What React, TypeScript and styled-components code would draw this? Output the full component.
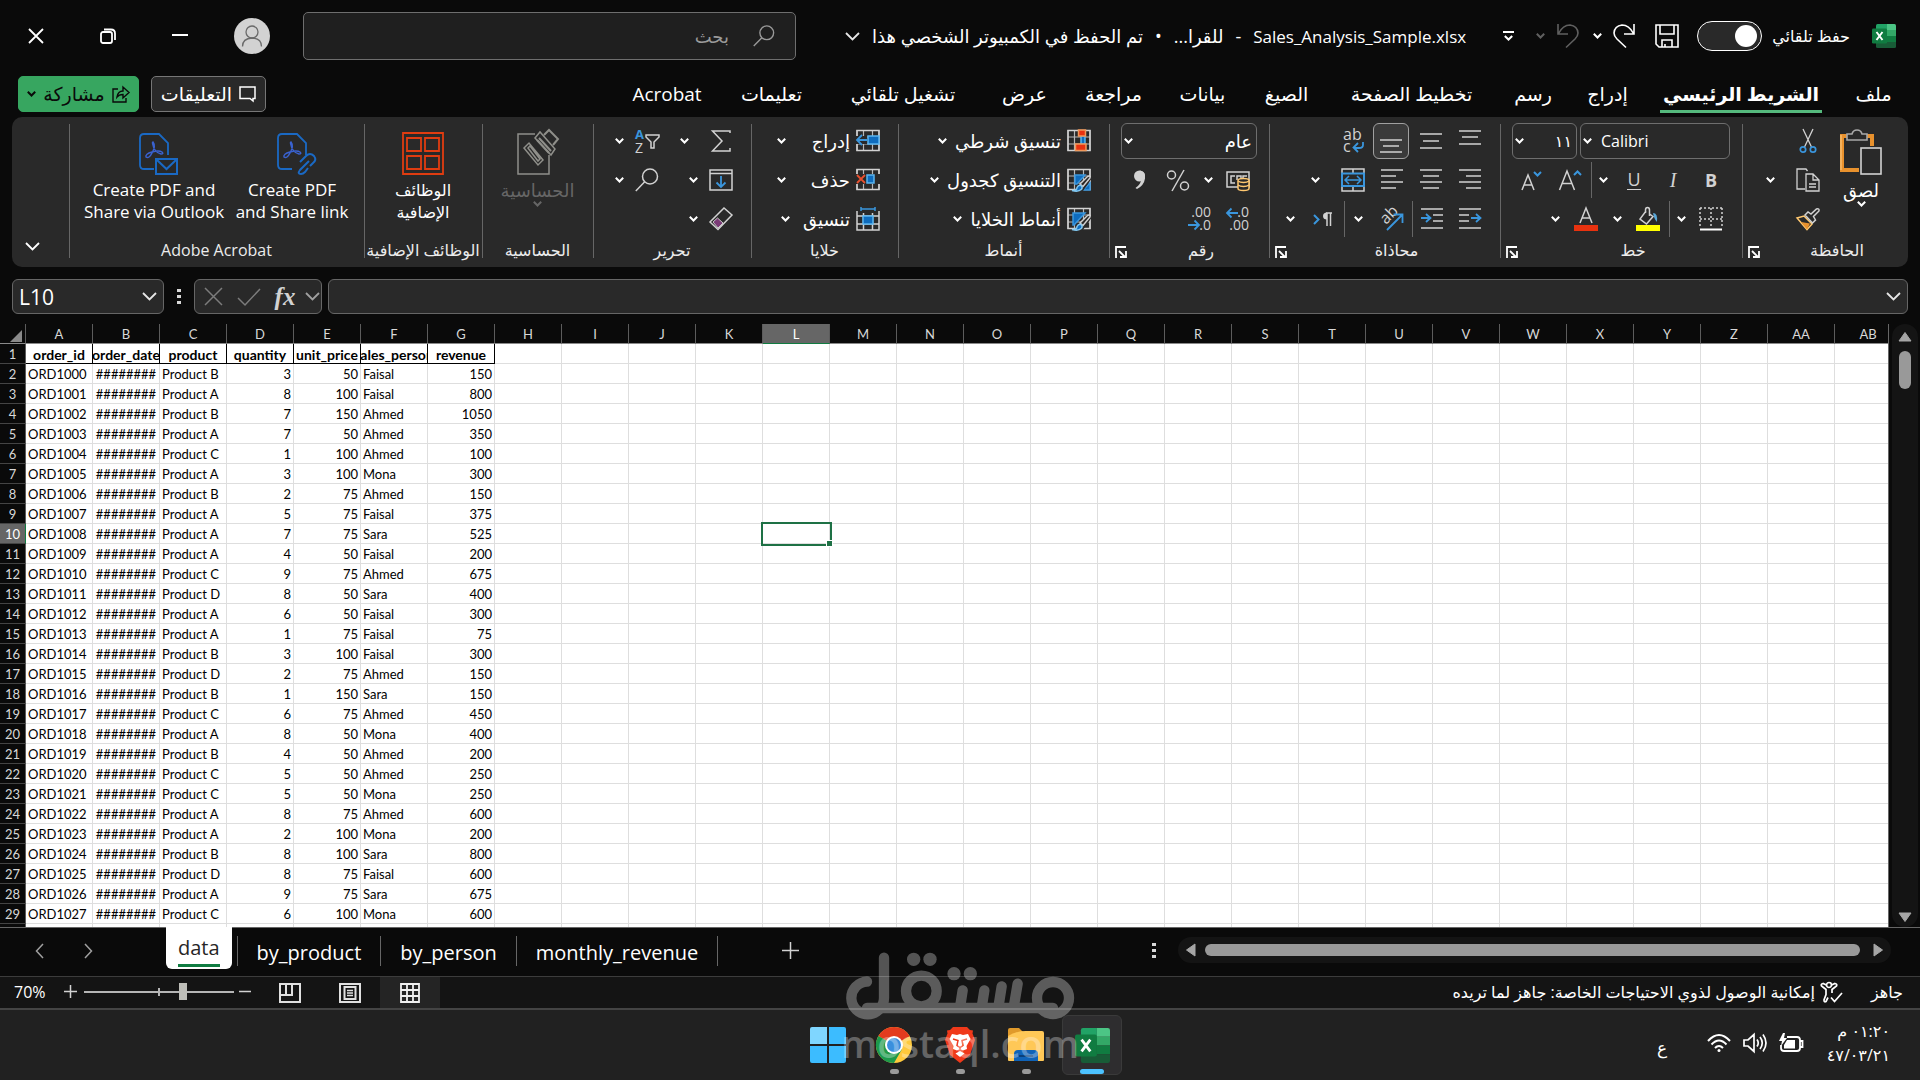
import React from "react";
import styled, { createGlobalStyle, css } from "styled-components";

/* ---------- tokens ---------- */
const c = {
  bg: "#0a0a0a",
  panel: "#292929",
  line: "#666666",
  fg: "#ffffff",
  icon: "#d2d2d2",
  blue: "#3a96dd",
  deep: "#0f6cbd",
  orange: "#e8912d",
  green: "#107c41",
};
const uiFont = `"Open Sans", "DejaVu Sans", sans-serif`;
const cellFont = `Lato, "Open Sans", sans-serif`;

const Global = createGlobalStyle`
  *, *::before, *::after { box-sizing: border-box; }
  body { margin: 0; background: ${c.bg}; color: ${c.fg}; font-family: ${uiFont}; }
  button, input, select { font: inherit; color: inherit; margin: 0; }
  button { background: none; border: 0; padding: 0; cursor: pointer; }
  svg { display: block; flex: none; overflow: visible; }
`;

/* ---------- shell ---------- */
const Shell = styled.div`
  position: relative;
  display: flex;
  flex-direction: column;
  height: 100vh;
  min-height: 640px;
  overflow: hidden;
  white-space: nowrap;
`;

/* ---------- title bar ---------- */
const TitleBar = styled.header`
  display: flex;
  align-items: center;
  height: 72px;
  flex: none;
  padding-inline-start: 24px;
  font-size: 18px;
`;
const AutoSave = styled.label`
  display: flex;
  align-items: center;
  gap: 10px;
  margin-inline-start: 22px;
  font-size: 16px;
`;
const Toggle = styled.input`
  appearance: none;
  width: 65px;
  height: 30px;
  border: 1px solid ${c.fg};
  border-radius: 15px;
  background: ${c.panel};
  display: flex;
  align-items: center;
  padding: 0 4px;
  &::after {
    content: "";
    width: 22px;
    height: 22px;
    border-radius: 50%;
    background: ${c.fg};
  }
`;
const Slot = styled.button<{ $w?: number; $dim?: boolean }>`
  display: flex;
  align-items: center;
  justify-content: center;
  flex: none;
  width: ${(p) => p.$w ?? 38}px;
  height: 36px;
  opacity: ${(p) => (p.$dim ? 0.35 : 1)};
`;
const DocTitle = styled.div`
  display: flex;
  align-items: center;
  flex: 1;
  gap: 12px;
  padding-inline-start: 23px;
  bdi { font-size: 17px; }
`;
const SearchBox = styled.label`
  display: flex;
  align-items: center;
  gap: 22px;
  width: 493px;
  height: 48px;
  padding-inline-start: 20px;
  border: 1px solid #6e6e6e;
  border-radius: 5px;
  background: #1f1f1f;
`;
const SearchInput = styled.input`
  flex: 1;
  min-width: 0;
  border: 0;
  outline: 0;
  background: none;
  &::placeholder { color: #9a9a9a; opacity: 1; }
`;
const WindowButtons = styled.div`
  display: flex;
  padding-inline-start: 15px;
`;

/* ---------- ribbon tabs ---------- */
const TabRow = styled.nav`
  display: flex;
  align-items: flex-start;
  height: 45px;
  flex: none;
  padding: 0 12px 0 18px;
`;
const Tab = styled.button<{ $w: number; $active?: boolean }>`
  width: ${(p) => p.$w}px;
  height: 41px;
  display: flex;
  justify-content: center;
  font-size: 19px;
  font-weight: ${(p) => (p.$active ? 700 : 400)};
  span {
    height: 41px;
    padding: 0 3px;
    line-height: 44px;
    border-bottom: 3px solid ${(p) => (p.$active ? "#55b97d" : "transparent")};
  }
`;
const Actions = styled.div`
  display: flex;
  gap: 12px;
  margin-inline-start: auto;
  padding-top: 4px;
`;
const Action = styled.button<{ $primary?: boolean }>`
  display: flex;
  align-items: center;
  justify-content: center;
  gap: 7px;
  height: 36px;
  width: ${(p) => (p.$primary ? 121 : 115)}px;
  border-radius: 5px;
  font-size: 19px;
  line-height: 30px;
  border: 1px solid ${(p) => (p.$primary ? "#37a660" : "#767676")};
  background: ${(p) => (p.$primary ? "#37a660" : c.panel)};
  color: ${(p) => (p.$primary ? "#0a0a0a" : c.fg)};
`;

/* ---------- ribbon ---------- */
const Ribbon = styled.section`
  display: flex;
  flex: none;
  height: 150px;
  margin: 0 12px;
  border-radius: 10px;
  background: ${c.panel};
`;
const Group = styled.div<{ $w: number }>`
  position: relative;
  display: flex;
  flex-direction: column;
  flex: none;
  width: ${(p) => p.$w}px;
  padding-top: 4px;
  &::after {
    content: "";
    position: absolute;
    inset-inline-end: 0;
    top: 7px;
    bottom: 9px;
    width: 1px;
    background: ${c.line};
  }
`;
const Body = styled.div<{ $pad?: number; $center?: boolean }>`
  display: flex;
  height: 117px;
  padding-inline-start: ${(p) => p.$pad ?? 0}px;
  justify-content: ${(p) => (p.$center ? "center" : "flex-start")};
`;
const Rows = styled.div`
  display: flex;
  flex-direction: column;
`;
const Row = styled.div<{ $gap?: number }>`
  display: flex;
  align-items: center;
  gap: ${(p) => p.$gap ?? 0}px;
  height: 39px;
`;
const Pair = styled.div`
  display: flex;
  width: 74px;
`;
const Foot = styled.div`
  display: flex;
  align-items: center;
  justify-content: center;
  height: 24px;
  font-size: 16px;
  line-height: 24px;
  color: #ececec;
  span { flex: 1; text-align: center; }
`;
const Launcher = styled.button`
  width: 24px;
  height: 24px;
  display: flex;
  align-items: flex-end;
  justify-content: center;
  padding-bottom: 4px;
`;
const Divider = styled.i`
  width: 2px;
  height: 36px;
  flex: none;
  border-inline-start: 1px solid ${c.line};
`;
const Big = styled.button<{ $w?: number; $dim?: boolean; $size?: number }>`
  display: flex;
  flex-direction: column;
  align-items: center;
  width: ${(p) => p.$w ?? 100}px;
  padding-top: 8px;
  font-size: ${(p) => p.$size ?? 16}px;
  line-height: 22px;
  color: ${(p) => (p.$dim ? "#666" : c.fg)};
  svg + span { margin-top: 4px; }
`;
const Command = styled.button<{ $min?: number }>`
  display: flex;
  align-items: center;
  gap: 6px;
  height: 36px;
  font-size: 18px;
  line-height: 30px;
  span {
    min-width: ${(p) => p.$min ?? 0}px;
    text-align: start;
    padding-inline-end: 2px;
  }
`;
const SelectWrap = styled.div<{ $w: number }>`
  display: grid;
  align-items: center;
  width: ${(p) => p.$w}px;
  height: 36px;
  > * { grid-area: 1 / 1; }
  > svg { justify-self: end; margin-inline-end: 3px; pointer-events: none; }
`;
const Select = styled.select<{ $size?: number }>`
  appearance: none;
  width: 100%;
  height: 36px;
  padding: 0 4px 0 20px;
  border: 1px solid #6e6e6e;
  border-radius: 6px;
  background: transparent;
  font-size: ${(p) => p.$size ?? 16}px;
  outline: 0;
  option { background: ${c.panel}; }
`;
const Pressed = styled(Slot)`
  width: 36px;
  margin: 0 2px 0 1px;
  border: 1px solid #a0a0a0;
  border-radius: 6px;
  background: #3a3a3a;
`;
const Letter = styled.span<{ $b?: boolean; $i?: boolean; $u?: boolean }>`
  font-size: 18px;
  line-height: 20px;
  color: ${c.icon};
  font-weight: ${(p) => (p.$b ? 700 : 400)};
  ${(p) => p.$i && css`font-style: italic; font-family: "Liberation Serif", serif; font-size: 20px;`}
  ${(p) => p.$u && css`border-bottom: 1px solid ${c.icon};`}
`;
const Collapse = styled.button`
  flex: 1;
  display: flex;
  align-items: flex-end;
  justify-content: center;
  padding: 0 16px 16px 0;
`;

/* ---------- formula bar ---------- */
const FormulaBar = styled.div`
  display: flex;
  align-items: center;
  flex: none;
  height: 57px;
  padding: 2px 12px 0;
`;
const Field = styled.label<{ $w?: number }>`
  display: flex;
  align-items: center;
  height: 35px;
  ${(p) => (p.$w ? `width: ${p.$w}px; flex: none;` : "flex: 1;")}
  padding: 0 6px;
  border: 1px solid ${c.line};
  border-radius: 6px;
  background: ${c.panel};
`;
const FieldInput = styled.input`
  flex: 1;
  min-width: 0;
  border: 0;
  outline: 0;
  padding: 0;
  background: none;
  font-size: 21px;
  line-height: 28px;
`;
const FxBox = styled.div`
  display: flex;
  align-items: center;
  width: 128px;
  height: 35px;
  margin-inline-end: 6px;
  border: 1px solid ${c.line};
  border-radius: 6px;
  background: ${c.panel};
`;
const Fx = styled.span`
  font: italic 700 25px/28px "Liberation Serif", serif;
  color: ${c.icon};
`;

/* ---------- sheet ---------- */
const SheetArea = styled.main`
  display: flex;
  flex: 1;
  min-height: 0;
`;
const SheetClip = styled.div`
  flex: 1;
  min-width: 0;
  overflow: hidden;
  border-right: 1px solid ${c.line};
`;
const Sheet = styled.table`
  table-layout: fixed;
  width: 1902px;
  border-collapse: separate;
  border-spacing: 0;
  font-family: ${cellFont};
  font-size: 13px;
  line-height: 17px;
  color: #000;
`;
const ColHead = styled.th<{ $on?: boolean }>`
  height: 20px;
  padding: 2px 0 0;
  font-weight: 400;
  color: ${(p) => (p.$on ? "#fff" : "#d8d8d8")};
  background: ${(p) => (p.$on ? "#666" : c.bg)};
  border-right: 1px solid #5c5c5c;
  border-bottom: 1px solid ${(p) => (p.$on ? c.green : "#8a8a8a")};
`;
const RowHead = styled.th<{ $on?: boolean }>`
  height: 20px;
  padding: 2px 0 0;
  font-weight: 400;
  color: ${(p) => (p.$on ? "#fff" : "#d8d8d8")};
  background: ${(p) => (p.$on ? "#666" : c.bg)};
  border-right: 1px solid ${(p) => (p.$on ? c.green : "#5c5c5c")};
  border-bottom: 1px solid #444;
`;
const Corner = styled(ColHead)`
  svg { margin: 2px 3px 0 auto; }
`;
const Cell = styled.td<{ $a?: "left" | "right" | "center"; $title?: boolean }>`
  position: relative;
  height: 20px;
  padding: 2px 2px 0;
  background: #fff;
  text-align: ${(p) => p.$a ?? "left"};
  border-right: 1px solid ${(p) => (p.$title ? "#000" : "#dedede")};
  border-bottom: 1px solid ${(p) => (p.$title ? "#000" : "#dedede")};
  ${(p) => p.$title && css`font-weight: 700; font-size: 14px; padding: 2px 0 0;`}
`;
const Clip = styled.div`
  display: flex;
  justify-content: center;
  overflow: hidden;
`;
const Cursor = styled.div`
  position: absolute;
  z-index: 1;
  inset: -2px -3px -3px -2px;
  border: 2px solid #1e7145;
  &::after {
    content: "";
    position: absolute;
    right: -3px;
    bottom: -3px;
    width: 7px;
    height: 7px;
    border: 1px solid #fff;
    background: #1e7145;
  }
`;
const VScroll = styled.div`
  display: flex;
  flex-direction: column;
  align-items: center;
  width: 26px;
  margin: 0 2px 0 3px;
  border-radius: 13px;
  background: #141414;
  padding: 7px 0 4px;
`;
const VThumb = styled.div`
  width: 12px;
  height: 38px;
  margin: 8px 0 auto;
  border-radius: 6px;
  background: #999;
`;

/* ---------- sheet tabs ---------- */
const SheetBar = styled.div`
  display: flex;
  flex: none;
  height: 49px;
  padding: 0 29px 0 15px;
  border-top: 1px solid ${c.line};
  font-size: 20px;
`;
const NavSlot = styled.button<{ $w: number }>`
  display: flex;
  align-items: center;
  justify-content: center;
  width: ${(p) => p.$w}px;
  height: 45px;
`;
const SheetTabs = styled.div`
  display: flex;
  margin-inline-start: 53px;
`;
const ActiveSheet = styled.button`
  height: 42px;
  margin: -1px 5px 0 0;
  padding: 0 12px;
  border-radius: 0 0 6px 6px;
  background: #fff;
  color: #262626;
  span { display: block; height: 38px; line-height: 38px; border-bottom: 3px solid ${c.green}; }
`;
const SheetTab = styled.button`
  height: 30px;
  margin-top: 8px;
  padding: 4px 19px 0;
  line-height: 26px;
  border-right: 1px solid ${c.line};
  &:nth-child(2) { border-left: 1px solid ${c.line}; }
`;
const HScroll = styled.div`
  display: flex;
  align-items: center;
  justify-content: space-between;
  gap: 8px;
  width: 38%;
  height: 26px;
  margin-top: 9px;
  padding: 0 7px;
  border-radius: 13px;
  background: #141414;
`;
const HThumb = styled.div`
  flex: 1;
  height: 12px;
  margin-inline-end: 4px;
  border-radius: 6px;
  background: #999;
`;
const Spacer = styled.div`
  flex: 1;
`;

/* ---------- status bar ---------- */
const StatusBar = styled.footer`
  display: flex;
  align-items: center;
  flex: none;
  height: 32px;
  padding: 0 17px 2px 14px;
  border-top: 1px solid #3c3c3c;
  background: #141414;
  font-size: 16px;
`;
const Zoom = styled.label`
  display: flex;
  align-items: center;
`;
const Percent = styled.span`
  width: 46px;
`;
const Range = styled.input`
  appearance: none;
  direction: rtl;
  width: 150px;
  height: 24px;
  margin: 0 4px;
  background:
    linear-gradient(#b5b5b5, #b5b5b5) 50% 50% / 2px 8px no-repeat,
    linear-gradient(#b5b5b5, #b5b5b5) 50% 50% / 100% 2px no-repeat;
  &::-webkit-slider-thumb {
    appearance: none;
    width: 8px;
    height: 17px;
    background: #bdbdb8;
  }
`;
const ViewButtons = styled.div`
  display: flex;
  align-self: flex-start;
  margin-inline-start: 8px;
`;
const ViewButton = styled.button<{ $on?: boolean }>`
  display: flex;
  align-items: center;
  justify-content: center;
  width: 60px;
  height: 31px;
  background: ${(p) => (p.$on ? "#242424" : "transparent")};
`;
const StatusText = styled.div`
  display: flex;
  align-items: center;
  gap: 5px;
`;
const Ready = styled.span`
  margin-inline-end: 23px;
`;

/* ---------- taskbar ---------- */
const TaskBar = styled.footer`
  display: grid;
  grid-template-columns: 1fr auto 1fr;
  align-items: center;
  flex: none;
  height: 72px;
  border-top: 2px solid #444;
  background: #212121;
`;
const Apps = styled.div`
  grid-column: 2;
  display: flex;
  gap: 6px;
`;
const AppButton = styled.button<{ $on?: boolean; $mark?: "dot" | "bar" }>`
  position: relative;
  display: flex;
  align-items: center;
  justify-content: center;
  width: 60px;
  height: 60px;
  border-radius: 6px;
  border: 1px solid ${(p) => (p.$on ? "#3a3a3a" : "transparent")};
  background: ${(p) => (p.$on ? "#2e2d2f" : "transparent")};
  ${(p) =>
    p.$mark &&
    css`
      &::after {
        content: "";
        position: absolute;
        bottom: 0;
        width: ${p.$mark === "bar" ? 24 : 9}px;
        height: 5px;
        border-radius: 3px;
        background: ${p.$mark === "bar" ? "#4cc2ff" : "#9a9a9a"};
      }
    `}
`;
const Tray = styled.div`
  display: flex;
  align-items: center;
  justify-content: flex-end;
  gap: 12px;
  padding: 0 30px 4px 0;
`;
const Lang = styled.button`
  width: 34px;
  font-size: 17px;
  padding-top: 8px;
  margin-inline-end: 16px;
`;
const Clock = styled.time`
  width: 75px;
  font-size: 16px;
  line-height: 24px;
  text-align: start;
`;
const Watermark = styled.div`
  position: absolute;
  left: 50%;
  bottom: 14px;
  display: flex;
  flex-direction: column;
  align-items: center;
  width: 230px;
  margin-left: -115px;
  opacity: 0.3;
  pointer-events: none;
  font: 600 38px/46px "Open Sans", sans-serif;
`;

/* ---------- icons ---------- */
type IcoProps = { w?: number; h?: number; vb?: string; s?: string; sw?: number; children: React.ReactNode };
const Ico = ({ w = 24, h = 24, vb, s = c.icon, sw = 1.5, children }: IcoProps) => (
  <svg width={w} height={h} viewBox={vb ?? `0 0 ${w} ${h}`} fill="none" stroke={s} strokeWidth={sw} aria-hidden="true">
    {children}
  </svg>
);
const Chev = ({ s = "#fff" }: { s?: string }) => (
  <Ico w={9} h={6} s={s} sw={2}><path d="M.8.8 4.5 4.5 8.200.8" /></Ico>
);
const BigChev = ({ w = 15, s = "#e6e6e6" }: { w?: number; s?: string }) => (
  <Ico w={w} h={9} vb="0 0 15 9" s={s} sw={1.8}><path d="M1 1l6.500 6.500L14 1" /></Ico>
);
const ExcelLogo = ({ size = 24 }: { size?: number }) => (
  <svg width={size} height={size} viewBox="0 0 24 24" aria-hidden="true">
    <path d="M5.500 0H15v8H4V1.500Q4 0 5.500 0z" fill="#21a366" />
    <path d="M15 0h7.500Q24 0 24 1.500V6h-9z" fill="#4cc585" />
    <path d="M15 6h9v6h-9z" fill="#33a867" />
    <path d="M4 6h11v6H4z" fill="#1f8a50" />
    <path d="M15 12h9v6h-9z" fill="#107c41" />
    <path d="M4 12h11v6H4z" fill="#185c37" />
    <path d="M4 18h20v4.500Q24 24 22.500 24h-17Q4 24 4 22.500z" fill="#185c37" />
    <rect x="0" y="4.500" width="15" height="15" rx="1.300" fill="#107c41" />
    <path d="M4.500 8l6 8M10.500 8l-6 8" stroke="#fff" strokeWidth="1.900" />
  </svg>
);
const SearchIcon = ({ s = c.icon, size = 24 }: { s?: string; size?: number }) => (
  <Ico w={size} h={size} vb="0 0 24 24" s={s}><circle cx="15" cy="8.500" r="7.500" /><path d="M9.700 13.800.8 23" /></Ico>
);
const Lines = ({ rows }: { rows: [number, number, number][] }) => (
  <Ico w={22} h={24}>{rows.map(([x, y, w]) => <path key={y} d={`M${x} ${y}h${w}`} />)}</Ico>
);
const GridBase = () => (
  <>
    <path d="M1 1.500h22v20H1zM1 8h22M1 15h22M7.500 1.500v20M16.500 1.500v20" strokeWidth="1.200" stroke="#b8b8b8" />
    <path d="M1 1.500h22v20H1z" />
  </>
);
const Brush = () => (
  <>
    <path d="M9 22L20 8l5 2-9 13z" fill="#292929" stroke="none" />
    <path d="M13 16L20.500 8.500q3-1.500 2.500 1.500L16 18.500z" fill="#292929" stroke="#d2d2d2" />
    <path d="M5 22.500q5 .5 5-3 1.500-3 4-2 2 1.500.5 3.800-3 3-9.500 1.200z" fill="#0f6cbd" stroke="#83c8f0" />
  </>
);
const PdfPage = () => (
  <>
    <path d="M15 36H5q-4 0-4-4V5q0-4 4-4h15l9 9v12" stroke="#1a69c4" strokeWidth="1.800" />
    <path d="M14 9q3 4-1 11-3 6-6 4-1-3 6-5 7-2 10 0 2 2-1 2-7-2-8-9-1-3 0-3z" stroke="#3a62d0" strokeWidth="1.500" />
  </>
);
const LauncherIcon = () => (
  <Ico w={12} h={12} s="#fff" sw={1.8}><path d="M1 12V1h10M4 5l6 6M11 5v6H5" /></Ico>
);
const Dots = () => (
  <svg width="4" height="16" viewBox="0 0 4 16" fill="#d8d8d8" aria-hidden="true"><path d="M0 0h4v3H0zM0 6h4v3H0zM0 12h4v3H0z" /></svg>
);
const Arrow = ({ d }: { d: "u" | "d" | "l" | "r" }) => {
  const p = { u: "M7 1.500L13 10H1z", d: "M1 2h12L7 10.500z", l: "M1.500 7L10 1v12z", r: "M2 1v12l8.500-6z" }[d];
  const flat = d === "u" || d === "d";
  return (
    <svg width={flat ? 14 : 12} height={flat ? 12 : 14} fill="#a6a6a6" stroke="#a6a6a6" strokeLinejoin="round" aria-hidden="true"><path d={p} /></svg>
  );
};

const Drop = ({ w = 22, label }: { w?: number; label: string }) => (
  <Slot $w={w} aria-label={label}><Chev /></Slot>
);

/* ---------- data ---------- */
const tabs: [string, number][] = [
  ["ملف", 69], ["الشريط الرئيسي", 196], ["إدراج", 71], ["رسم", 78], ["تخطيط الصفحة", 165], ["الصيغ", 85],
  ["بيانات", 83], ["مراجعة", 95], ["عرض", 83], ["تشغيل تلقائي", 160], ["تعليمات", 103], ["Acrobat", 106],
];
const headers = ["order_id", "order_date", "product", "quantity", "unit_price", "sales_person", "revenue"];
const orders: [string, number, number, string][] = [
  ["B", 3, 50, "Faisal"], ["A", 8, 100, "Faisal"], ["B", 7, 150, "Ahmed"], ["A", 7, 50, "Ahmed"], ["C", 1, 100, "Ahmed"],
  ["A", 3, 100, "Mona"], ["B", 2, 75, "Ahmed"], ["A", 5, 75, "Faisal"], ["A", 7, 75, "Sara"], ["A", 4, 50, "Faisal"],
  ["C", 9, 75, "Ahmed"], ["D", 8, 50, "Sara"], ["A", 6, 50, "Faisal"], ["A", 1, 75, "Faisal"], ["B", 3, 100, "Faisal"],
  ["D", 2, 75, "Ahmed"], ["B", 1, 150, "Sara"], ["C", 6, 75, "Ahmed"], ["A", 8, 50, "Mona"], ["B", 4, 50, "Ahmed"],
  ["C", 5, 50, "Ahmed"], ["C", 5, 50, "Mona"], ["A", 8, 75, "Ahmed"], ["A", 2, 100, "Mona"], ["B", 8, 100, "Sara"],
  ["D", 8, 75, "Faisal"], ["A", 9, 75, "Sara"], ["C", 6, 100, "Mona"],
];
const columns = Array.from({ length: 28 }, (_, i) => (i < 26 ? String.fromCharCode(65 + i) : "A" + String.fromCharCode(39 + i)));

/* ---------- sections ---------- */
const Title = () => (
  <TitleBar dir="rtl">
    <ExcelLogo />
    <AutoSave>حفظ تلقائي<Toggle type="checkbox" role="switch" /></AutoSave>
    <Slot $w={60} aria-label="حفظ">
      <Ico s="#fff" sw={1.6}><path d="M1 1h22v22H4l-3-3zM5 1v9h14V1M7 23v-7h10v7M10 20v3" /></Ico>
    </Slot>
    <Slot $w={26} aria-label="إعادة">
      <Ico w={22} s="#fff" sw={1.6}><path d="M21 0v10H11M20.500 9.500Q16 1 9 1 1.500 2 1 9q0 3 3 6l9 8.500" /></Ico>
    </Slot>
    <Drop w={28} label="خيارات الإعادة" />
    <Slot $w={30} $dim aria-label="تراجع">
      <Ico w={22} s="#fff" sw={1.6}><path d="M1 0v10h10M1.500 9.500Q6 1 13 1q7.500 1 8 8 0 3-3 6l-9 8.500" /></Ico>
    </Slot>
    <Slot $w={26} $dim aria-label="خيارات التراجع"><Chev /></Slot>
    <Slot $w={38} aria-label="تخصيص شريط الوصول السريع">
      <Ico w={11} h={10} s="#fff" sw={2}><path d="M0 1h11M1.800 5l3.700 3.500L9.200 5" /></Ico>
    </Slot>
    <DocTitle>
      <bdi>Sales_Analysis_Sample.xlsx</bdi>
      <span>-</span>
      <span>للقرا...</span>
      <span>•</span>
      <span>تم الحفظ في الكمبيوتر الشخصي هذا</span>
      <BigChev />
    </DocTitle>
    <SearchBox>
      <SearchIcon s="#9a9a9a" size={22} />
      <SearchInput placeholder="بحث" aria-label="بحث" />
    </SearchBox>
    <WindowButtons>
      <Slot $w={72} aria-label="الحساب">
        <Ico w={36} h={36} s="#6a6a6a" sw={1.3}>
          <circle cx="18" cy="18" r="18" fill="#d2d2d2" stroke="none" />
          <circle cx="18" cy="14" r="6" /><path d="M8.500 28.500q0-8 9.500-8.500 9.500.5 9.500 8.500" />
        </Ico>
      </Slot>
      <Slot $w={72} aria-label="تصغير"><Ico w={16} h={16} s="#fff" sw={2}><path d="M0 7h16" /></Ico></Slot>
      <Slot $w={72} aria-label="استعادة">
        <Ico w={16} h={16} s="#fff" sw={1.8}><rect x="1" y="4" width="11" height="11" rx="2" /><path d="M4 1.500h7q4 0 4 4V12" /></Ico>
      </Slot>
      <Slot $w={72} aria-label="إغلاق"><Ico w={16} h={16} s="#fff" sw={1.8}><path d="M1 1l14 14M15 1L1 15" /></Ico></Slot>
    </WindowButtons>
  </TitleBar>
);

const TabsBar = () => (
  <TabRow dir="rtl">
    {tabs.map(([t, w], i) => <Tab key={t} $w={w} $active={i === 1}><span>{t}</span></Tab>)}
    <Actions>
      <Action>
        <Ico w={17} h={16} s="#fff"><path d="M1 1h15v11.500h-2V15l-3-2.500H1z" /></Ico>
        التعليقات
      </Action>
      <Action $primary>
        <Ico w={18} h={18} s="#0a0a0a" sw={1.4}><path d="M6 4H1v13h13v-4M5 12q1-6 6-6V2l6 5.500L11 13V9.500Q7 9.500 5 12z" /></Ico>
        مشاركة
        <Chev s="#0a0a0a" />
      </Action>
    </Actions>
  </TabRow>
);

const Clipboard = () => (
  <Group $w={166}>
    <Body $pad={12}>
      <Big $w={70} $size={18}>
        <Ico w={42} h={46} sw={1.6}>
          <path d="M8 7H2v34h17M26 7h6v10" stroke="#e8912d" strokeWidth="4" />
          <path d="M1 41V6" stroke="#ffd08a" strokeWidth="1" />
          <path d="M7 11V5h5q1-4 5-4t5 4h5v6z" fill="#292929" stroke="#a8a8a8" />
          <rect x="21" y="19" width="20" height="26" fill="#292929" />
        </Ico>
        <span>لصق</span>
        <Chev />
      </Big>
      <Rows>
        <Row>
          <Slot $w={36} aria-label="قص">
            <Ico w={18} h={24} sw={1.3}>
              <path d="M4 0l8.500 18M14 0L5.500 18" /><circle cx="4" cy="20.500" r="2.700" stroke={c.blue} strokeWidth="1.700" /><circle cx="14" cy="20.500" r="2.700" stroke={c.blue} strokeWidth="1.700" />
            </Ico>
          </Slot>
        </Row>
        <Row>
          <Slot $w={36} aria-label="نسخ">
            <Ico><path d="M9 21H1V1h9l1.500 2M10 6h7l6 6v11H10zM17 6v6h6M13 16h7M13 19h7" strokeWidth="1.300" /></Ico>
          </Slot>
          <Drop w={40} label="خيارات النسخ" />
        </Row>
        <Row>
          <Slot $w={36} aria-label="نسخ التنسيق">
            <Ico>
              <path d="M1 11l7-2 8 8-5 5.500z" stroke="#ffc870" /><path d="M5 15l9 1.500-3 6z" fill={c.orange} stroke="none" />
              <path d="M9 8l3-3 3 2 5.500-5q3-1 2.500 2L17.500 9.500l2 3.500-3 3z" fill="#292929" />
            </Ico>
          </Slot>
        </Row>
      </Rows>
    </Body>
    <Foot><span>الحافظة</span><Launcher aria-label="إعدادات الحافظة"><LauncherIcon /></Launcher></Foot>
  </Group>
);

const FontGroup = () => (
  <Group $w={242}>
    <Body $pad={12}>
      <Rows>
        <Row $gap={3}>
          <SelectWrap $w={150}>
            <Select aria-label="الخط" dir="ltr"><option>Calibri</option></Select><Chev />
          </SelectWrap>
          <SelectWrap $w={65}>
            <Select aria-label="حجم الخط"><option>١١</option></Select><Chev />
          </SelectWrap>
        </Row>
        <Row>
          <Slot aria-label="غامق"><Letter $b>B</Letter></Slot>
          <Slot aria-label="مائل"><Letter $i>I</Letter></Slot>
          <Slot $w={40} aria-label="تسطير"><Letter $u>U</Letter></Slot>
          <Drop label="خيارات التسطير" />
          <Divider />
          <Slot $w={40} aria-label="تكبير الخط">
            <Ico><path d="M1.500 22L9 3l7.500 19M4 15.500h10" /><path d="M16 7l3.500-3.500L23 7" stroke={c.blue} strokeWidth="2" /></Ico>
          </Slot>
          <Slot aria-label="تصغير الخط">
            <Ico><path d="M3 22L9 7l6 15M5 17h8" /><path d="M15 4l3.500 3.500L22 4" stroke={c.blue} strokeWidth="2" /></Ico>
          </Slot>
        </Row>
        <Row>
          <Slot aria-label="الحدود">
            <Ico><path d="M1 1h22M1 12h22M1 1v20M12 1v20M23 1v20" strokeDasharray="2 2" /><path d="M1 22.500h22" stroke="#fff" strokeWidth="2" /></Ico>
          </Slot>
          <Drop label="خيارات الحدود" />
          <Divider />
          <Slot $w={40} aria-label="لون التعبئة">
            <Ico><path d="M10 4l-6 8 6.500 5L17 9.500l-4-3M9.500 6V3q0-2.500 2-2.500t2 2.500v6" /><path d="M17 6q5 0 4 9-3-3-4-9z" fill="#5ba8d8" stroke="none" /><path d="M0 18h24v6H0z" fill="#ffff00" stroke="none" /></Ico>
          </Slot>
          <Drop label="ألوان التعبئة" />
          <Slot $w={40} aria-label="لون الخط">
            <Ico><path d="M6 16l6-15 6 15M8 11h8" /><path d="M0 18h24v6H0z" fill="#e8320f" stroke="none" /></Ico>
          </Slot>
          <Drop label="ألوان الخط" />
        </Row>
      </Rows>
    </Body>
    <Foot><span>خط</span><Launcher aria-label="إعدادات الخط"><LauncherIcon /></Launcher></Foot>
  </Group>
);

const AlignGroup = () => (
  <Group $w={231}>
    <Body $pad={11}>
      <Rows>
        <Row>
          <Slot $w={39} aria-label="محاذاة لأعلى"><Lines rows={[[0, 2, 22], [3, 8, 16], [0, 15, 22]]} /></Slot>
          <Slot $w={39} aria-label="محاذاة للوسط"><Lines rows={[[0, 5, 22], [3, 12, 16], [0, 19, 22]]} /></Slot>
          <Pressed aria-label="محاذاة لأسفل" aria-pressed><Lines rows={[[0, 11, 22], [3, 17, 16], [0, 23, 22]]} /></Pressed>
          <Slot $w={37} aria-label="التفاف النص">
            <Ico w={22} h={26}>
              <text x="0" y="12" fontSize="16" fill={c.icon} stroke="none" direction="ltr">ab</text>
              <text x="0" y="24" fontSize="16" fill={c.icon} stroke="none" direction="ltr">c</text>
              <path d="M20 14v3q0 3-4 3h-5M15 15l-4.500 4.500L15 24" stroke={c.blue} strokeWidth="1.800" />
            </Ico>
          </Slot>
        </Row>
        <Row>
          <Slot $w={39} aria-label="محاذاة لليمين"><Lines rows={[[0, 2, 22], [7, 8, 15], [0, 14, 22], [7, 20, 15]]} /></Slot>
          <Slot $w={39} aria-label="توسيط"><Lines rows={[[0, 2, 22], [3, 8, 16], [0, 14, 22], [3, 20, 16]]} /></Slot>
          <Slot $w={39} aria-label="محاذاة لليسار"><Lines rows={[[0, 2, 22], [0, 8, 15], [0, 14, 22], [0, 20, 15]]} /></Slot>
          <Slot $w={39} aria-label="دمج وتوسيط">
            <Ico><path d="M1 1h22v22H1zM12 1v5M12 18v5" /><path d="M1 5.500h22v12.500H1z" fill="#292929" stroke={c.blue} strokeWidth="2" /><path d="M4 12h16M8 8l-4 4 4 4M16 8l4 4-4 4" stroke={c.blue} /></Ico>
          </Slot>
          <Drop w={36} label="خيارات الدمج" />
        </Row>
        <Row>
          <Slot $w={39} aria-label="زيادة المسافة البادئة">
            <Ico w={22}><path d="M0 2h22M0 8h10M0 14h10M0 21h22" /><path d="M12 11h9M17 7l4.500 4L17 15" stroke={c.blue} strokeWidth="1.800" /></Ico>
          </Slot>
          <Slot $w={37} aria-label="إنقاص المسافة البادئة">
            <Ico w={22}><path d="M0 2h22M12 8h10M12 14h10M0 21h22" /><path d="M0 11h9M5 7l4.500 4L5 15" stroke={c.blue} strokeWidth="1.800" /></Ico>
          </Slot>
          <Divider />
          <Slot $w={40} aria-label="الاتجاه">
            <Ico w={26} h={24}>
              <text x="0" y="0" fontSize="16" fill={c.icon} stroke="none" direction="ltr" transform="translate(8 18) rotate(-45)">ab</text>
              <path d="M9 23L24 8M15.500 7.500H24.500v8.500" stroke={c.blue} strokeWidth="1.800" />
            </Ico>
          </Slot>
          <Drop w={26} label="خيارات الاتجاه" />
          <Divider />
          <Slot $w={40} aria-label="اتجاه النص">
            <Ico w={20} h={18}><path d="M1 5l4.500 4.500L1 14" stroke={c.blue} strokeWidth="2" /><path d="M19 3h-6M14 3v13M17.500 3v13" /><path d="M14 2.500v7q-4 0-4-3.500t4-3.500z" fill={c.icon} stroke="none" /></Ico>
          </Slot>
          <Drop w={26} label="خيارات اتجاه النص" />
        </Row>
      </Rows>
    </Body>
    <Foot><span>محاذاة</span><Launcher aria-label="إعدادات المحاذاة"><LauncherIcon /></Launcher></Foot>
  </Group>
);

const Decimals = ({ inc }: { inc?: boolean }) => (
  <Ico w={24} h={26}>
    <text x="23" y="11" fontSize="14" textAnchor="end" fill={c.icon} stroke="none" direction="ltr">{inc ? ".0" : ".00"}</text>
    <text x="23" y="24" fontSize="14" textAnchor="end" fill={c.icon} stroke="none" direction="ltr">{inc ? ".00" : ".0"}</text>
    <path d={inc ? "M12 7H1M5.500 2.500L1 7l4.500 4.500" : "M0 19h11M6.500 14.500L11 19l-4.500 4.500"} stroke={c.blue} strokeWidth="1.800" />
  </Ico>
);

const NumberGroup = () => (
  <Group $w={160}>
    <Body $pad={12}>
      <Rows>
        <Row>
          <SelectWrap $w={136}><Select $size={18} aria-label="تنسيق الأرقام"><option>عام</option></Select><Chev /></SelectWrap>
        </Row>
        <Row>
          <Slot aria-label="تنسيق أرقام المحاسبة">
            <Ico>
              <path d="M1 4h22v15H1z" /><path d="M9 8H5v7h4M11 12V8h4v4M17 11V8h4" />
              <path d="M12 12.500q0-2 5.500-2t5.500 2v8q0 2-5.500 2t-5.500-2z" fill="#292929" stroke="#ffc870" />
              <path d="M12 13q2 1.500 5.500 1.500T23 13M12 17q2 1.500 5.500 1.500T23 17" stroke="#ffc870" />
            </Ico>
          </Slot>
          <Drop label="خيارات العملة" />
          <Slot aria-label="نمط النسبة المئوية">
            <Ico><circle cx="5.500" cy="7" r="4" /><circle cx="18.500" cy="18" r="4" /><path d="M18 2L6 23" /></Ico>
          </Slot>
          <Slot aria-label="نمط الفاصلة">
            <svg width="14" height="20" viewBox="0 0 14 20" fill={c.icon} aria-hidden="true"><circle cx="6.500" cy="6" r="5.500" /><path d="M7 .5q6 1 5 8-1 7-8 10.500l-1.500-1Q8 14 8.500 9z" /></svg>
          </Slot>
        </Row>
        <Row>
          <Slot aria-label="زيادة المنازل العشرية"><Decimals inc /></Slot>
          <Slot aria-label="إنقاص المنازل العشرية"><Decimals /></Slot>
        </Row>
      </Rows>
    </Body>
    <Foot><span>رقم</span><Launcher aria-label="إعدادات الرقم"><LauncherIcon /></Launcher></Foot>
  </Group>
);

const StylesGroup = () => (
  <Group $w={211}>
    <Body $pad={18}>
      <Rows>
        <Row><Command>
          <Ico h={23}><GridBase /><path d="M14 7h4v8h-4z" fill={c.deep} stroke="#5bb5f0" /><path d="M11.500 1h7v6h-7zM8.500 15h10.500v6.500H8.500z" fill="#e8320f" stroke="#f0985a" /></Ico>
          <span>تنسيق شرطي</span><Chev />
        </Command></Row>
        <Row><Command>
          <Ico h={24}><GridBase /><path d="M8 7h10l-8 9H8zM23 15v7h-7z" fill={c.deep} stroke={c.blue} /><Brush /></Ico>
          <span>التنسيق كجدول</span><Chev />
        </Command></Row>
        <Row><Command>
          <Ico h={24}><GridBase /><path d="M6 6h12L7 18H6z" fill={c.deep} stroke={c.blue} /><Brush /></Ico>
          <span>أنماط الخلايا</span><Chev />
        </Command></Row>
      </Rows>
    </Body>
    <Foot><span>أنماط</span></Foot>
  </Group>
);

const CellsGroup = () => (
  <Group $w={147}>
    <Body $pad={18}>
      <Rows>
        <Row><Command $min={58}>
          <Ico h={23}><GridBase /><path d="M12 7h11v8H12z" fill={c.deep} stroke="#5bb5f0" /><path d="M0 7h11v8H0z" fill="#292929" stroke="none" /><path d="M11 11H1M6 6l-5 5 5 5" stroke={c.blue} strokeWidth="1.800" /></Ico>
          <span>إدراج</span><Chev />
        </Command></Row>
        <Row><Command $min={58}>
          <Ico h={23}><GridBase /><path d="M0 6h24v10H0z" fill="#292929" stroke="none" /><path d="M11 7h7v8h-7z" fill={c.deep} stroke="#5bb5f0" /><path d="M1 7l8 8M9 7l-8 8" stroke="#e8502f" strokeWidth="1.800" /></Ico>
          <span>حذف</span><Chev />
        </Command></Row>
        <Row><Command $min={54}>
          <Ico h={24}><path d="M1 4v19h22V4M1 9h22M1 17h22M7.500 6v17M16.500 6v17" /><path d="M7 9h10v8H7z" fill={c.deep} stroke="#5bb5f0" /><path d="M5 2h14M5 0v4M19 0v4" stroke={c.blue} /></Ico>
          <span>تنسيق</span><Chev />
        </Command></Row>
      </Rows>
    </Body>
    <Foot><span>خلايا</span></Foot>
  </Group>
);

const EditGroup = () => (
  <Group $w={158}>
    <Body $pad={10}>
      <Rows>
        <Row>
          <Pair>
            <Slot $w={40} aria-label="جمع تلقائي"><Ico w={20}><path d="M19 4V2H1.500L11 12 1.500 22H19v-3" /></Ico></Slot>
            <Drop w={34} label="خيارات الجمع" />
          </Pair>
          <Slot $w={40} aria-label="فرز وتصفية">
            <Ico w={25} h={26}>
              <text x="0" y="11" fontSize="13" fontWeight="700" fill={c.blue} stroke="none" direction="ltr">A</text>
              <text x="0" y="25" fontSize="14" fill={c.icon} stroke="none" direction="ltr">Z</text>
              <path d="M11 7h13v2l-5 5v6h-3v-6l-5-5z" />
            </Ico>
          </Slot>
          <Drop w={16} label="خيارات الفرز" />
        </Row>
        <Row>
          <Pair>
            <Slot $w={40} aria-label="تعبئة"><Ico><path d="M1 2h22v20H1zM1 5.500h22" /><path d="M12 8v11M7.500 14.500L12 19l4.500-4.500" stroke={c.blue} strokeWidth="1.800" /></Ico></Slot>
            <Drop w={16} label="خيارات التعبئة" />
          </Pair>
          <Slot $w={40} aria-label="بحث وتحديد"><SearchIcon /></Slot>
          <Drop w={16} label="خيارات البحث" />
        </Row>
        <Row>
          <Pair>
            <Slot $w={40} aria-label="مسح"><Ico><path d="M1 15L15 1l8 7L9 22.500z" /><path d="M4 15l4.500-4 5.500 5-5 5z" fill="#7a3a76" stroke="#c8c8c8" strokeWidth="1" /></Ico></Slot>
            <Drop w={16} label="خيارات المسح" />
          </Pair>
        </Row>
      </Rows>
    </Body>
    <Foot><span>تحرير</span></Foot>
  </Group>
);

const ExtraGroups = () => (
  <>
    <Group $w={111}>
      <Body $center>
        <Big $dim $w={96} $size={18}>
          <Ico w={42} h={46} s="#8f8f8a">
            <path d="M18 5H1v40h31V26" />
            <path d="M7 19l5-5 14 17-5 5zM11 19l2-2 10 13-2 2zM18 9l5-6 15 17-4 6z" /><path d="M22 9l12 13M20 11l12 13M27 6l5-5 9 9-5 6" strokeWidth="2" />
          </Ico>
          <span>الحساسية</span>
          <Chev s="#666" />
        </Big>
      </Body>
      <Foot><span>الحساسية</span></Foot>
    </Group>
    <Group $w={118}>
      <Body $center>
        <Big $w={112}>
          <Ico w={42} h={46} s="#e03c10" sw={1.8}>
            <path d="M1 4h40v41H1z" /><path d="M5 9h14v13H5zM23 9h14v13H23zM5 27h14v13H5zM23 27h14v13H23z" />
          </Ico>
          <span>الوظائف<br />الإضافية</span>
        </Big>
      </Body>
      <Foot><span>الوظائف الإضافية</span></Foot>
    </Group>
    <Group $w={295}>
      <Body $pad={5}>
        <Big $w={134} $size={17}>
          <Ico w={50} h={46} vb="-10 -4 50 46">
            <PdfPage />
            <path d="M23 29l6-6q4-4 8 0 3 4-1 7l-3 3M32 28l-9 9q-3 4 1 4 2 0 4-2l3-4" stroke="#1a69c4" strokeWidth="2" />
          </Ico>
          <span>Create PDF<br />and Share link</span>
        </Big>
        <Big $w={142} $size={17}>
          <Ico w={50} h={46} vb="-10 -4 50 46">
            <PdfPage />
            <path d="M17 26h21v15H17zM18 27l9.500 9L37 27" stroke="#1a69c4" strokeWidth="2" />
          </Ico>
          <span>Create PDF and<br />Share via Outlook</span>
        </Big>
      </Body>
      <Foot><span>Adobe Acrobat</span></Foot>
    </Group>
    <Collapse aria-label="طي الشريط"><BigChev s="#fff" /></Collapse>
  </>
);

const Formula = () => (
  <FormulaBar>
    <Field $w={152}>
      <FieldInput defaultValue="L10" aria-label="مربع الاسم" />
      <BigChev />
    </Field>
    <NavSlot $w={30} aria-label="تغيير الحجم"><Dots /></NavSlot>
    <FxBox>
      <Slot $w={36} aria-label="إلغاء"><Ico w={19} h={19} s="#7c7c7c"><path d="M1 1l17 17M18 1L1 18" /></Ico></Slot>
      <Slot $w={36} aria-label="إدخال"><Ico w={24} h={18} s="#7c7c7c"><path d="M1 10l7 7L23 1" /></Ico></Slot>
      <Slot $w={36} aria-label="إدراج دالة"><Fx>fx</Fx></Slot>
      <Slot $w={18} aria-label="خيارات الدالة"><BigChev s="#a0a0a0" /></Slot>
    </FxBox>
    <Field>
      <FieldInput aria-label="شريط الصيغة" />
      <BigChev />
    </Field>
  </FormulaBar>
);

const renderRow = (r: number) => {
  const o = r >= 2 ? orders[r - 2] : undefined;
  return (
    <tr key={r}>
      <RowHead scope="row" $on={r === 10}>{r}</RowHead>
      {columns.map((col, i) => {
        if (r === 1 && i < 7) return <Cell key={col} $title><Clip>{headers[i]}</Clip></Cell>;
        if (o && i < 7) {
          const values = [`ORD${998 + r}`, "########", `Product ${o[0]}`, o[1], o[2], o[3], o[1] * o[2]];
          return <Cell key={col} $a={i === 1 ? "center" : typeof values[i] === "number" ? "right" : "left"}>{values[i]}</Cell>;
        }
        return <Cell key={col}>{r === 10 && col === "L" && <Cursor />}</Cell>;
      })}
    </tr>
  );
};

const SheetView = () => (
  <SheetArea>
    <SheetClip>
      <Sheet>
        <colgroup>
          <col width={26} />
          {columns.map((k) => <col key={k} width={67} />)}
        </colgroup>
        <thead>
          <tr>
            <Corner aria-label="تحديد الكل"><svg width="12" height="12" aria-hidden="true"><path d="M12 0v12H0z" fill="#8a8a8a" /></svg></Corner>
            {columns.map((k) => <ColHead key={k} scope="col" $on={k === "L"}>{k}</ColHead>)}
          </tr>
        </thead>
        <tbody>{Array.from({ length: 29 }, (_, i) => renderRow(i + 1))}
          <tr>
            <RowHead />
            {columns.map((k) => <Cell key={k} />)}
          </tr>
        </tbody>
      </Sheet>
    </SheetClip>
    <VScroll>
      <button aria-label="تمرير لأعلى"><Arrow d="u" /></button>
      <VThumb />
      <button aria-label="تمرير لأسفل"><Arrow d="d" /></button>
    </VScroll>
  </SheetArea>
);

const Bottom = () => (
  <>
    <SheetBar>
      <NavSlot $w={49} aria-label="السابق"><Ico w={9} h={16} s="#a0a0a0"><path d="M8 1L1.500 8 8 15" /></Ico></NavSlot>
      <NavSlot $w={49} aria-label="التالي"><Ico w={9} h={16} s="#a0a0a0"><path d="M1 1l6.500 7L1 15" /></Ico></NavSlot>
      <SheetTabs>
        <ActiveSheet><span>data</span></ActiveSheet>
        <SheetTab>by_product</SheetTab>
        <SheetTab>by_person</SheetTab>
        <SheetTab>monthly_revenue</SheetTab>
      </SheetTabs>
      <NavSlot $w={144} aria-label="ورقة جديدة"><Ico w={17} h={17}><path d="M8.500 0v17M0 8.500h17" /></Ico></NavSlot>
      <Spacer />
      <NavSlot $w={48} aria-label="تغيير حجم الشريط"><Dots /></NavSlot>
      <HScroll>
        <button aria-label="تمرير لليسار"><Arrow d="l" /></button>
        <HThumb />
        <button aria-label="تمرير لليمين"><Arrow d="r" /></button>
      </HScroll>
    </SheetBar>
    <StatusBar>
      <Zoom>
        <Percent>70%</Percent>
        <Slot $w={20} aria-label="تكبير"><Ico w={13} h={13}><path d="M6.500 0v13M0 6.500h13" /></Ico></Slot>
        <Range type="range" min={10} max={190} defaultValue={70} aria-label="التكبير" />
        <Slot $w={14} aria-label="تصغير العرض"><Ico w={12} h={13}><path d="M0 6.500h12" /></Ico></Slot>
      </Zoom>
      <ViewButtons>
        <ViewButton aria-label="معاينة فواصل الصفحات"><Ico w={22} h={20} s="#e0e0e0" sw={2}><path d="M1 1h20v18H1zM1 12h12V1M7 1v11" /></Ico></ViewButton>
        <ViewButton aria-label="تخطيط الصفحة"><Ico w={22} h={20} s="#e0e0e0" sw={2}><path d="M1 1h20v18H1zM5.500 4h11v12h-11z" /><path d="M8 7.500h6M8 10h6M8 12.500h6" strokeWidth="1.300" /></Ico></ViewButton>
        <ViewButton $on aria-label="عادي"><Ico w={20} h={20} s="#f0f0f0" sw={1.8}><path d="M1 1h18v18H1zM1 7h18M1 13h18M7 1v18M13 1v18" /></Ico></ViewButton>
      </ViewButtons>
      <Spacer />
      <StatusText dir="rtl">
        <Ready>جاهز</Ready>
        <Ico w={23} h={22} s="#fff" sw={1.7}>
          <circle cx="9" cy="4" r="2.500" /><path d="M6.500 4L3 2.500q-2.500.5-1.500 2.500L6 8.500v5L4 19q0 2.500 2 1.500l2-4M11.500 4L15 2.500q2.500.5 1.500 2.500L12 8.500V12" /><path d="M11 16.500l3.500 4L22 12" />
        </Ico>
        إمكانية الوصول لذوي الاحتياجات الخاصة: جاهز لما تريده
      </StatusText>
    </StatusBar>
    <TaskBar>
      <Apps>
        <AppButton aria-label="ابدأ">
          <svg width="36" height="36" aria-hidden="true"><path d="M0 2q0-2 2-2h15v17H0z" fill="#7fd6ff" /><path d="M19 0h15q2 0 2 2v15H19zM0 19h17v17H2q-2 0-2-2zM19 19h17v15q0 2-2 2H19z" fill="#3cbcff" /></svg>
        </AppButton>
        <AppButton $mark="dot" aria-label="Chrome">
          <svg width="36" height="36" viewBox="0 0 36 36" aria-hidden="true">
            <circle cx="18" cy="18" r="18" fill="#ffc93c" />
            <path d="M18 18L2.400 9A18 18 0 0 1 33.600 9z" fill="#e33b1e" />
            <path d="M2.400 9A18 18 0 0 0 18 36l7.800-13.500L18 18z" fill="#1d9a4b" />
            <path d="M18 9h15.600L26 13z" fill="#e33b1e" />
            <circle cx="18" cy="18" r="9" fill="#fff" /><circle cx="18" cy="18" r="7" fill="#3a8fdd" />
          </svg>
        </AppButton>
        <AppButton $mark="dot" aria-label="Brave">
          <svg width="30" height="36" viewBox="0 0 30 36" aria-hidden="true">
            <path d="M8 0h14l3 3 3 .5-.5 3L30 13l-5 15-10 8-10-8L0 13l2.500-6.500-.5-3L5 3z" fill="#f0391a" />
            <path d="M7 7l5 1 3-1 3 1 5-1 2.500 5-4 7 .5 3-4 1.500-3-1.500-3 1.500L8 22l.5-3-4-7z" fill="#fff" />
            <path d="M10.500 26.500L15 24l4.500 2.500L15 30z" fill="#fff" />
            <path d="M8 12l5 1.500-1 5 3 2 3-2-1-5 5-1.500M15 20v2" fill="none" stroke="#f0391a" strokeWidth="1.500" />
          </svg>
        </AppButton>
        <AppButton $mark="dot" aria-label="مستكشف الملفات">
          <svg width="36" height="34" viewBox="0 0 36 34" aria-hidden="true">
            <path d="M0 2q0-2 2-2h9l4 4v6H0z" fill="#e09a2b" /><path d="M0 8q8-5 18-5h16q2 0 2 2v27q0 1-1 1H1q-1 0-1-1z" fill="#ffc857" />
            <path d="M6 33v-7q0-4 4-4h16q4 0 4 4v7z" fill="#0f63b8" /><path d="M11 28h14" stroke="#0a3f7a" strokeWidth="2" />
          </svg>
        </AppButton>
        <AppButton $on $mark="bar" aria-label="Excel"><ExcelLogo size={35} /></AppButton>
      </Apps>
      <Tray>
        <Lang>ع</Lang>
        <Ico w={24} h={20} s="#fff" sw={2}><path d="M1 8Q12-4 23 8M4.500 11.500q7.500-8 15 0M8 15q4-4 8 0" /><circle cx="12" cy="17.500" r="1.500" fill="#fff" stroke="none" /></Ico>
        <Ico w={24} h={20} s="#fff" sw={1.7}><path d="M1 7h4l6-5.500v17L5 13H1zM14 6.500q2.500 3.500 0 7M17 4q4.500 6 0 12M20 1.500q6 8.500 0 17" /></Ico>
        <Ico w={24} h={20} s="#fff" sw={1.8}><path d="M8 4h10q3 0 3 3v8q0 3-3 3H5q-3 0-3-3v-3M21 8h2.500v6H21" /><path d="M8 7h8v8.500H5V12zM4 0L0 8h3l-1 5 6-8H5l1-5z" fill="#fff" stroke="none" /></Ico>
        <Clock dir="rtl">٠١:٢٠ م<br />٤٧/٠٣/٢١</Clock>
      </Tray>
    </TaskBar>
  </>
);

const Mark = () => (
  <Watermark>
    <svg width="230" height="68" viewBox="315 155 690 204" fill="none" stroke="#fff" strokeWidth="31" strokeLinecap="round" aria-hidden="true">
      <path d="M381 244a49 49 0 1 0 51 49V172" />
      <path d="M381 323h558" />
      <circle cx="544" cy="272" r="46" />
      <path d="M668 270l-7 45M733 270l-7 45M785 258l-9 57M833 250l-11 65" />
      <circle cx="939" cy="293" r="48" />
      <g fill="#fff" stroke="none"><circle cx="521" cy="177" r="20" /><circle cx="570" cy="177" r="20" /><circle cx="642" cy="220" r="20" /><circle cx="691" cy="220" r="20" /></g>
    </svg>
    <span>mostaql.com</span>
  </Watermark>
);

export default function App() {
  return (
    <Shell>
      <Global />
      <Title />
      <TabsBar />
      <Ribbon dir="rtl">
        <Clipboard />
        <FontGroup />
        <AlignGroup />
        <NumberGroup />
        <StylesGroup />
        <CellsGroup />
        <EditGroup />
        <ExtraGroups />
      </Ribbon>
      <Formula />
      <SheetView />
      <Bottom />
      <Mark />
    </Shell>
  );
}
